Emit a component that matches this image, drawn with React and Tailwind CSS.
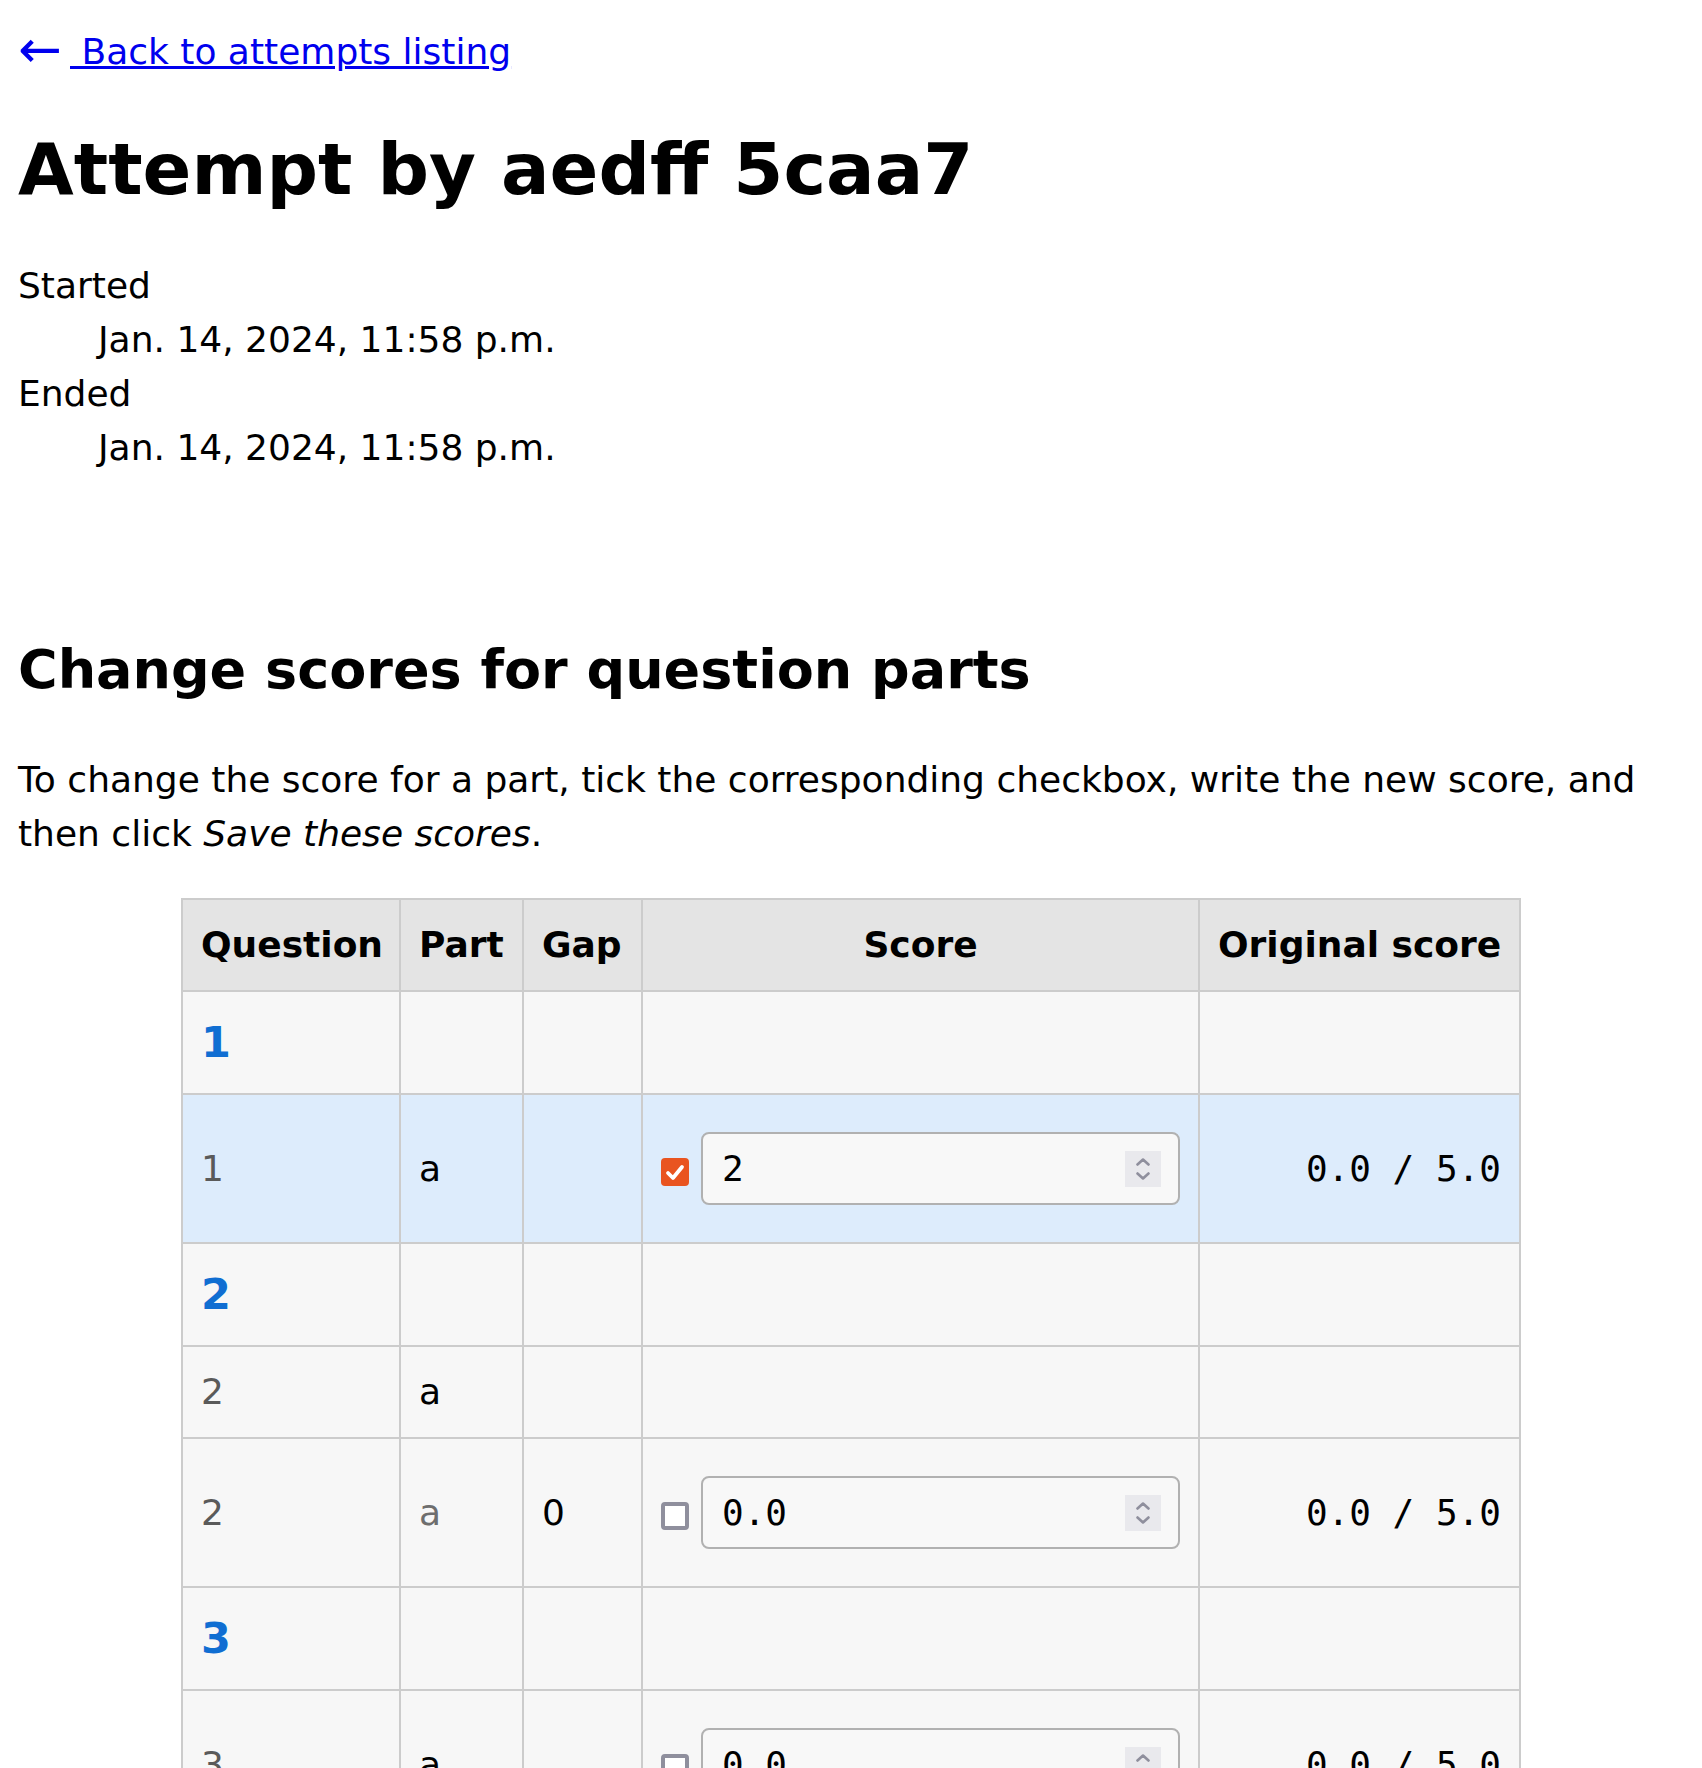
import React from 'react';

const rows = [
    {type: 'q', n: 1},
    {type: 'part', q: 1, part: 'a', gap: '', score: '2', checked: true, orig: '0.0 / 5.0', active: true},
    {type: 'q', n: 2},
    {type: 'part', q: 2, part: 'a', gap: ''},
    {type: 'part', q: 2, part: 'a', partGrey: true, gap: '0', score: '0.0', checked: false, orig: '0.0 / 5.0'},
    {type: 'q', n: 3},
    {type: 'part', q: 3, part: 'a', gap: '', score: '0.0', checked: false, orig: '0.0 / 5.0'},
];

const cell = "border-2 border-[#cccccc] px-[18px] py-[18px] align-middle";

const Checkbox = ({checked}) => {
    if (checked) {
        return (
            <span className="mt-[6px] flex h-[28px] w-[28px] shrink-0 items-center justify-center rounded-[4px] bg-[#e95420]">
                <svg width="28" height="28" viewBox="0 0 28 28" fill="none">
                    <path d="M7 15 L12 20 L21 9" stroke="white" strokeWidth="3.8" strokeLinecap="round" strokeLinejoin="round"/>
                </svg>
            </span>
        );
    }
    return <span className="mt-[6px] block h-[28px] w-[28px] shrink-0 rounded-[4px] border-4 border-[#8f8f9d] bg-white"/>;
};

const ScoreInput = ({value}) => (
    <div className="my-[19px] flex h-[73px] flex-1 items-center rounded-[8px] border-2 border-[#b1b1b1] bg-[#f8f8f8] pl-[19px] pr-[17px]">
        <span className="flex-1 font-['DejaVu_Sans_Mono',monospace]">{value}</span>
        <span className="flex h-[36px] w-[36px] flex-col items-center justify-center gap-[6px] bg-[#e9e9ed]">
            <svg width="14" height="8" viewBox="0 0 14 8" fill="none">
                <path d="M1.5 6.5 L7 1.5 L12.5 6.5" stroke="#8f8f9d" strokeWidth="2.6" strokeLinecap="round" strokeLinejoin="round"/>
            </svg>
            <svg width="14" height="8" viewBox="0 0 14 8" fill="none">
                <path d="M1.5 1.5 L7 6.5 L12.5 1.5" stroke="#8f8f9d" strokeWidth="2.6" strokeLinecap="round" strokeLinejoin="round"/>
            </svg>
        </span>
    </div>
);

export default function App() {
    return (
        <div className="min-h-screen bg-white px-[18px] pb-10 font-['DejaVu_Sans',sans-serif] text-[36px] leading-[54px] text-black">
            <div className="pt-[25px]">
                <a href="#" className="text-[#0000ee]">
                    <span className="inline-block w-[52px] origin-left -translate-y-[2px] scale-[1.45]">←</span>
                    <span className="underline"> Back to attempts listing</span>
                </a>
            </div>

            <h1 className="mt-[47px] text-[72px] font-bold leading-[86px]">Attempt by aedff 5caa7</h1>

            <dl className="mt-[47px]">
                <dt>Started</dt>
                <dd className="ml-[80px]">Jan. 14, 2024, 11:58 p.m.</dd>
                <dt>Ended</dt>
                <dd className="ml-[80px]">Jan. 14, 2024, 11:58 p.m.</dd>
            </dl>

            <h2 className="mt-[162px] text-[54px] font-bold leading-[65px]">Change scores for question parts</h2>

            <p className="mt-[51px]">
                To change the score for a part, tick the corresponding checkbox, write the new score, and then
                click <em>Save these scores</em>.
            </p>

            <table className="mx-auto mt-[37px] w-[1338px] table-fixed border-collapse">
                <colgroup>
                    <col className="w-[218px]"/>
                    <col className="w-[123px]"/>
                    <col className="w-[119px]"/>
                    <col className="w-[557px]"/>
                    <col className="w-[321px]"/>
                </colgroup>
                <thead>
                <tr className="bg-[#e4e4e4]">
                    <th className={`${cell} text-left`}>Question</th>
                    <th className={`${cell} text-left`}>Part</th>
                    <th className={`${cell} text-left`}>Gap</th>
                    <th className={`${cell} text-center`}>Score</th>
                    <th className={`${cell} text-left whitespace-nowrap`}>Original score</th>
                </tr>
                </thead>
                <tbody>
                {rows.map((r, i) => r.type === 'q' ? (
                    <tr key={i} className="bg-[#f7f7f7]">
                        <td className={cell}>
                            <span className="text-[43px] font-bold leading-[65px] text-[#106ed2]">{r.n}</span>
                        </td>
                        <td className={cell}></td>
                        <td className={cell}></td>
                        <td className={cell}></td>
                        <td className={cell}></td>
                    </tr>
                ) : (
                    <tr key={i} className={r.active ? "bg-[#ddecfc]" : "bg-[#f7f7f7]"}>
                        <td className={`${cell} text-[#5a5a5a]`}>{r.q}</td>
                        <td className={`${cell} ${r.partGrey ? 'text-[#6e6e6e]' : ''}`}>{r.part}</td>
                        <td className={cell}>{r.gap}</td>
                        <td className={`${cell} py-0`}>
                            {r.score !== undefined && (
                                <div className="flex items-center gap-[12px]">
                                    <Checkbox checked={r.checked}/>
                                    <ScoreInput value={r.score}/>
                                </div>
                            )}
                        </td>
                        <td className={`${cell} text-right font-['DejaVu_Sans_Mono',monospace]`}>{r.orig}</td>
                    </tr>
                ))}
                </tbody>
            </table>
        </div>
    );
}
